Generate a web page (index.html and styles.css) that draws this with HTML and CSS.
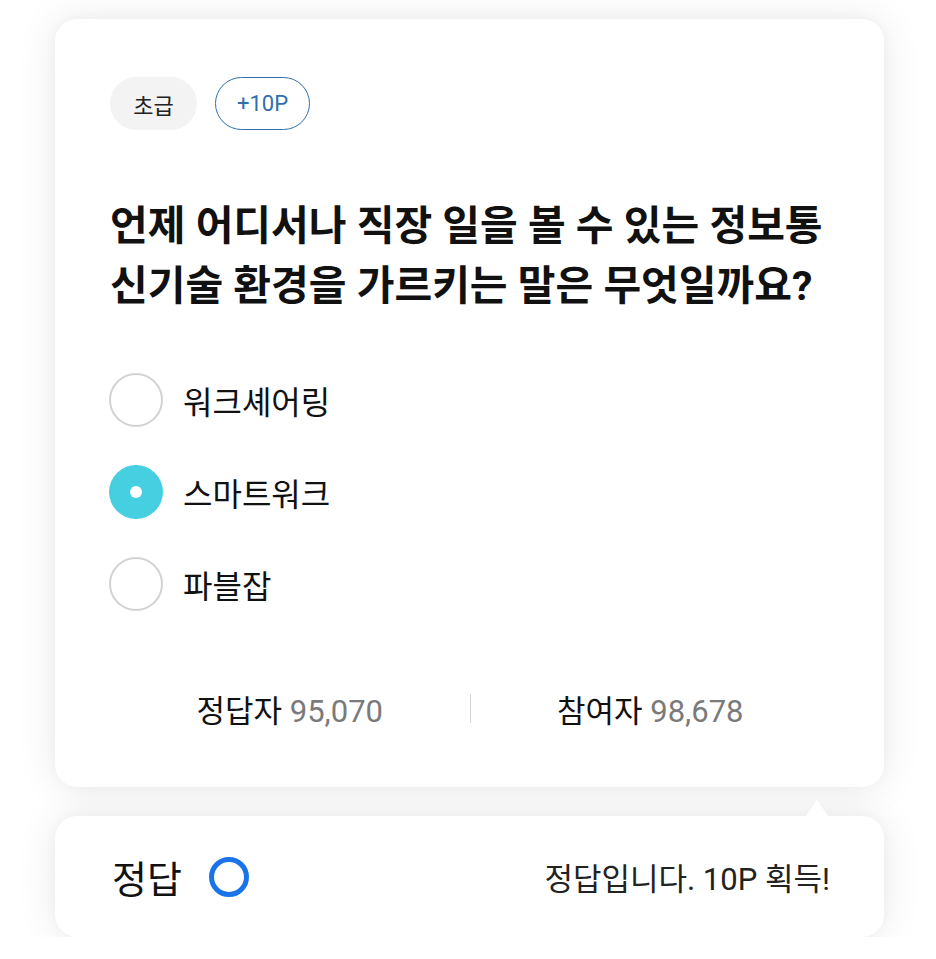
FILE: index.html
```html
<!DOCTYPE html>
<html lang="ko">
<head>
<meta charset="utf-8">
<link rel="stylesheet" href="styles.css">
</head>
<body>
<main class="page">
  <section class="quiz-card">
    <div class="tags">
      <span class="tag tag-level">초급</span>
      <span class="tag tag-point">+10P</span>
    </div>
    <h1 class="question">언제 어디서나 직장 일을 볼 수 있는 정보통신기술 환경을 가르키는 말은 무엇일까요?</h1>
    <ul class="options">
      <li class="option"><span class="radio"></span><span class="option-text">워크셰어링</span></li>
      <li class="option"><span class="radio radio-on"></span><span class="option-text">스마트워크</span></li>
      <li class="option"><span class="radio"></span><span class="option-text">파블잡</span></li>
    </ul>
    <div class="stats">
      <div class="stat"><span class="stat-label">정답자</span> <span class="stat-num">95,070</span></div>
      <span class="divider"></span>
      <div class="stat"><span class="stat-label">참여자</span> <span class="stat-num">98,678</span></div>
    </div>
  </section>
  <section class="result-card">
    <span class="arrow"></span>
    <div class="result-left">
      <span class="result-label">정답</span>
      <span class="ring"></span>
    </div>
    <span class="result-msg">정답입니다. 10P 획득!</span>
  </section>
</main>
</body>
</html>
```
FILE: styles.css
```css
* { box-sizing: border-box; }
html, body { margin: 0; padding: 0; }
body {
  background: #ffffff;
  font-family: Roboto, "Noto Sans CJK KR", sans-serif;
  color: #111;
}
.page {
  width: 829px;
  margin-left: 55px;
  padding-top: 19px;
  display: flex;
  flex-direction: column;
  gap: 29px;
}
.quiz-card, .result-card {
  background: #fff;
  border-radius: 22px;
  box-shadow: 0 0 40px rgba(0,0,0,0.09), 0 0 12px rgba(0,0,0,0.03);
}
.quiz-card {
  height: 768px;
  padding: 58px 54px 0 55px;
}
.tags { display: flex; gap: 18px; }
.tag {
  height: 53px;
  border-radius: 27px;
  display: inline-flex;
  align-items: center;
  justify-content: center;
  font-size: 22px;
}
.tag-level {
  width: 87px;
  background: #f3f3f3;
  color: #222;
}
.tag-point {
  width: 95px;
  border: 1.5px solid #2f6fae;
  color: #2f6fae;
}
.question {
  margin: 0;
  margin-top: 66px;
  width: 740px;
  font-size: 41px;
  line-height: 60px;
  font-weight: 700;
  color: #111;
  word-break: break-all;
}
.options {
  list-style: none;
  margin: 57px 0 0 0;
  padding: 0;
  display: flex;
  flex-direction: column;
  gap: 38px;
}
.option {
  display: flex;
  align-items: center;
  gap: 20px;
  height: 54px;
}
.radio {
  width: 54px;
  height: 54px;
  border-radius: 50%;
  border: 2px solid #d2d2d2;
  flex: none;
  display: flex;
  align-items: center;
  justify-content: center;
  margin-left: -1px;
}
.radio-on {
  border: none;
  background: #45cfe0;
}
.radio-on::after {
  content: "";
  width: 12px;
  height: 12px;
  border-radius: 50%;
  background: #fff;
}
.option-text {
  font-size: 32px;
  color: #111;
}
.stats {
  margin-top: 75px;
  display: flex;
  align-items: center;
}
.stat {
  flex: 1;
  text-align: center;
  font-size: 31px;
  white-space: nowrap;
}
.stat-label { color: #111; }
.stat-num { color: #7a7a7a; }
.divider {
  width: 1px;
  height: 29px;
  background: #d5d5d5;
  flex: none;
}
.result-card {
  position: relative;
  height: 121px;
  display: flex;
  align-items: center;
  justify-content: space-between;
  padding: 0 54px 0 57px;
}
.arrow {
  position: absolute;
  top: -16px;
  right: 56px;
  width: 0;
  height: 0;
  border-left: 11px solid transparent;
  border-right: 11px solid transparent;
  border-bottom: 16px solid #fff;
}
.result-left {
  display: flex;
  align-items: center;
  gap: 27px;
}
.result-label {
  font-size: 38px;
  color: #111;
}
.ring {
  width: 40px;
  height: 40px;
  border-radius: 50%;
  border: 5px solid #1a73e8;
}
.result-msg {
  font-size: 31px;
  color: #222;
}
```
